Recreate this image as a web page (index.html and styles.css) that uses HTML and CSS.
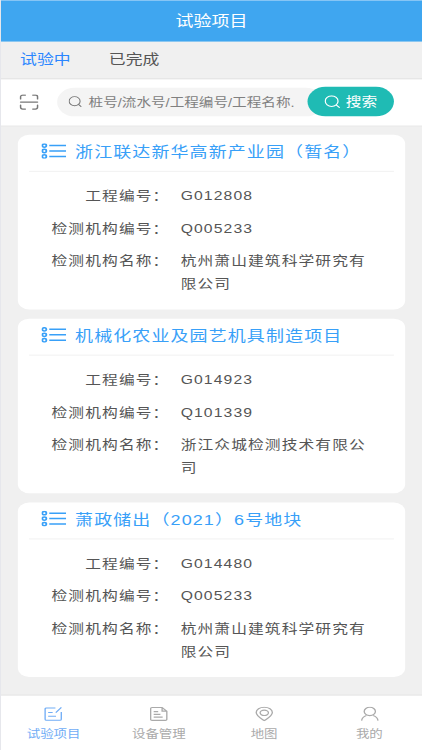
FILE: index.html
```html
<!DOCTYPE html>
<html lang="zh-CN">
<head>
  <meta charset="UTF-8" />
  <meta name="viewport" content="width=device-width, initial-scale=1.0"/>
  <title>试验项目</title>
  <link rel="stylesheet" href="styles.css">
</head>
<body>

<svg class="sprite" width="0" height="0">
  <symbol id="iconList" viewBox="0 0 22 17">
    <g fill="none" stroke="currentColor">
      <g stroke-width="1.6"><circle cx="2.6" cy="2.600" r="1.800"/><circle cx="2.600" cy="8.500" r="1.800"/><circle cx="2.600" cy="14.400" r="1.800"/></g>
      <path stroke-width="1.6" d="M7 2.600h15M7 8.500h15M7 14.400h15"/>
    </g>
  </symbol>
  <symbol id="iconSearch" viewBox="0 0 14 14">
    <g fill="none" stroke="currentColor" stroke-width="1.1" stroke-linecap="round"><circle cx="6.5" cy="6.5" r="5.700"/><path d="M10.800 10.800l2.500 2.500"/></g>
  </symbol>
</svg>

<div class="app">
  <header class="navbar">试验项目</header>

  <nav class="tabs">
    <span class="tab active">试验中</span>
    <span class="tab">已完成</span>
  </nav>

  <div class="search-bar">
    <svg class="scan-icon" viewBox="0 0 18 18" fill="none" stroke="currentColor" stroke-width="1.4" stroke-linecap="round">
      <path d="M1 5.500V3a2 2 0 0 1 2-2h2.500M12.500 1H15a2 2 0 0 1 2 2v2.500M1 12.500V15a2 2 0 0 0 2 2h2.500M12.500 17H15a2 2 0 0 0 2-2v-2.500M1 9h16"/>
    </svg>
    <div class="search-box">
      <svg class="search-icon"><use href="#iconSearch"/></svg>
      <span class="search-text">桩号/流水号/工程编号/工程名称.</span>
    </div>
    <button class="search-button"><svg><use href="#iconSearch"/></svg>搜索</button>
  </div>

  <main class="project-list">
    <section class="card">
      <h2 class="card-title"><svg><use href="#iconList"/></svg>浙江联达新华高新产业园（暂名）</h2>
      <div class="card-body">
        <div class="row"><span class="label">工程编号：</span><span class="value">G012808</span></div>
        <div class="row"><span class="label">检测机构编号：</span><span class="value">Q005233</span></div>
        <div class="row"><span class="label">检测机构名称：</span><span class="value">杭州萧山建筑科学研究有限公司</span></div>
      </div>
    </section>

    <section class="card">
      <h2 class="card-title"><svg><use href="#iconList"/></svg>机械化农业及园艺机具制造项目</h2>
      <div class="card-body">
        <div class="row"><span class="label">工程编号：</span><span class="value">G014923</span></div>
        <div class="row"><span class="label">检测机构编号：</span><span class="value">Q101339</span></div>
        <div class="row"><span class="label">检测机构名称：</span><span class="value">浙江众城检测技术有限公司</span></div>
      </div>
    </section>

    <section class="card">
      <h2 class="card-title"><svg><use href="#iconList"/></svg>萧政储出（2021）6号地块</h2>
      <div class="card-body">
        <div class="row"><span class="label">工程编号：</span><span class="value">G014480</span></div>
        <div class="row"><span class="label">检测机构编号：</span><span class="value">Q005233</span></div>
        <div class="row"><span class="label">检测机构名称：</span><span class="value">杭州萧山建筑科学研究有限公司</span></div>
      </div>
    </section>
  </main>

  <footer class="tabbar">
    <div class="tabbar-item active">
      <svg viewBox="0 0 16 16"><path d="M10 1.500H2a1.200 1.200 0 0 0-1.200 1.200v11a1.200 1.200 0 0 0 1.200 1.200h12a1.200 1.200 0 0 0 1.200-1.200V6M15.300 1l-5 5.500M3.500 6.500h4M3.500 10.500h7"/></svg>
      <span>试验项目</span>
    </div>
    <div class="tabbar-item">
      <svg viewBox="0 0 16 16"><path d="M11 1H2A1.200 1.200 0 0 0 .8 2.200v11.600A1.200 1.200 0 0 0 2 15h12a1.200 1.200 0 0 0 1.200-1.200V5zM11 1v4h4.200M3.500 5.500h4M3.500 8.500h6M3.500 11.500h8"/></svg>
      <span>设备管理</span>
    </div>
    <div class="tabbar-item">
      <svg viewBox="0 0 16 16"><path d="M8 15.300C5 12.800.8 10 .8 6.500.8 3.200 4 .8 8 .8s7.200 2.400 7.200 5.700C15.200 10 11 12.800 8 15.300z"/><ellipse cx="8" cy="6.800" rx="3.700" ry="2.900"/></svg>
      <span>地图</span>
    </div>
    <div class="tabbar-item">
      <svg viewBox="0 0 16 16"><ellipse cx="8" cy="5.300" rx="5" ry="4.500"/><path d="M.7 15.300c.3-2.600 1.800-4.500 4.300-5.500M15.300 15.300c-.3-2.600-1.800-4.500-4.300-5.500"/></svg>
      <span>我的</span>
    </div>
  </footer>
</div>

</body>
</html>
```
FILE: styles.css
```css
* {
  box-sizing: border-box;
}

html {
  height: 750px;
  overflow: hidden;
}

body {
  margin: 0;
  padding-left: 1px;
  height: 750px;
  overflow: hidden;
  background-color: #e6e7ec;
  font-family: "Liberation Sans", "Noto Sans CJK SC", sans-serif;
  color: #555;
}

svg {
  display: block;
  flex-shrink: 0;
}

.sprite {
  position: absolute;
}

/* 375x812 layout, stretched to the window */
.app {
  display: flex;
  flex-direction: column;
  width: 375px;
  height: 812px;
  margin-bottom: -62px;
  background-color: #f0f0f0;
  transform: scale(1.1227, 0.9236);
  transform-origin: 0 0;
}

.navbar {
  height: 45px;
  line-height: 43px;
  border-top: 1px solid #8dc8f6;
  background-color: #3fa6f0;
  color: #fff;
  font-size: 16px;
  text-align: center;
}

.tabs {
  display: flex;
  gap: 34px;
  height: 41px;
  padding-left: 17px;
  line-height: 38px;
  border-bottom: 1px solid #dcdcdc;
  font-size: 15px;
}

.tab.active {
  color: #2a86ff;
}

.search-bar {
  display: flex;
  align-items: center;
  height: 51px;
  padding: 0 25px 2px 16px;
  background-color: #fff;
  border-bottom: 1px solid #e2e2e2;
}

.scan-icon {
  width: 18px;
  height: 17px;
  margin-top: 1px;
  margin-right: 16px;
  color: #777;
}

.search-box {
  display: flex;
  align-items: center;
  flex: 1;
  min-width: 0;
  height: 31px;
  margin-right: -14px;
  padding: 0 25px 0 10px;
  border-radius: 16px;
  background-color: #f4f4f4;
}

.search-icon {
  width: 12px;
  height: 12px;
  margin-right: 6px;
  color: #777;
}

.search-text {
  flex: 1;
  white-space: nowrap;
  font-size: 13px;
  color: #808080;
}

.search-button {
  display: flex;
  align-items: center;
  justify-content: center;
  gap: 5px;
  position: relative;
  width: 77px;
  height: 32px;
  padding: 0 0 2px;
  border: none;
  border-radius: 16px;
  background-color: #1fbbb4;
  color: #fff;
  font-family: inherit;
  font-size: 14px;
}

.search-button svg {
  width: 14px;
  height: 14px;
  margin-top: 2px;
}

.project-list {
  display: flex;
  flex-direction: column;
  flex: 1;
  gap: 10px;
  padding: 9px 15px 0;
}

.card {
  height: 189px;
  padding: 0 10px;
  border-radius: 10px;
  background-color: #fff;
}

.card-title {
  display: flex;
  align-items: center;
  height: 40px;
  margin: 0;
  padding: 0 0 5px 11px;
  border-bottom: 1px solid #f0f0f0;
  color: #38a0f8;
  font-size: 16px;
  font-weight: normal;
  letter-spacing: 1px;
}

.card-title svg {
  width: 22px;
  height: 17px;
  margin-right: 8px;
}

.card-body {
  display: flex;
  flex-direction: column;
  gap: 10px;
  padding-top: 14px;
  font-size: 14px;
  line-height: 25px;
  letter-spacing: 1px;
}

.row {
  display: flex;
}

.label {
  width: 125px;
  margin-right: 10px;
  text-align: right;
}

.value {
  width: 170px;
}

.tabbar {
  display: flex;
  height: 60px;
  border-top: 1px solid #dcdcdc;
  background-color: #fff;
}

.tabbar-item {
  display: flex;
  flex-direction: column;
  align-items: center;
  flex: 1;
  padding-top: 12px;
  color: #aaa;
  font-size: 12px;
  line-height: 18px;
}

.tabbar-item svg {
  width: 17px;
  height: 16px;
  margin-bottom: 5px;
  fill: none;
  stroke: currentColor;
  stroke-width: 1.2;
}

.tabbar-item.active {
  color: #71adf6;
}
```
